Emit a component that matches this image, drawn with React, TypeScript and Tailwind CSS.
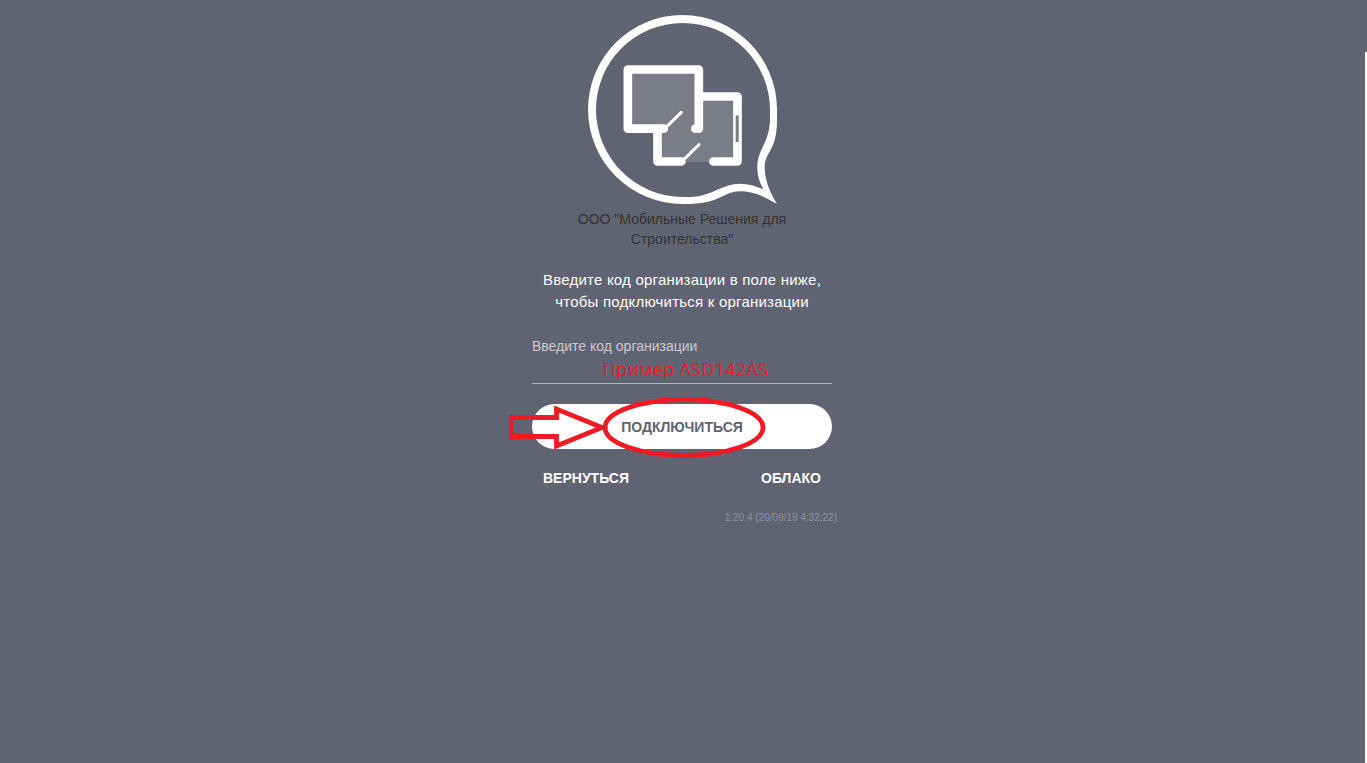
function Logo() {
  return (
    <svg className="block h-[210px] w-[210px] shrink-0" viewBox="0 0 630 630" aria-hidden="true">
      <path
        fill="#fff"
        fillRule="evenodd"
        d="M591 311V345C591 440 553 440 554 490C555 530 574 570 591 597C560 580 528 559 480 559C430 559 420 597 325 597H308A284 284 0 0 1 24 313A284 284 0 0 1 307 30A284 284 0 0 1 591 311Z
           M570 315A262 261 0 0 0 308 54A260 260 0 0 0 48 313A262 262 0 0 0 308 576H330C400 573 425 536 480 536C505 536 528 543 550 553C538 532 532 512 532 490C531 430 567 420 570 345Z"
      />
      <path fill="#7a7c88" d="M150 200H350V280H465V471H240V365H150Z" />
      <g fill="none" stroke="#fff" strokeWidth="26" strokeLinejoin="round" strokeLinecap="round">
        <path d="M251 371H143.500V193.500H356.500V371H346" />
        <path d="M370 274.500H472.500V469.500H400" />
        <path d="M232.500 384V469.500H304" />
      </g>
      <path d="M257 368L304 322M311 464L357 419" stroke="#fff" strokeWidth="9" strokeLinecap="round" />
      <rect x="467" y="331" width="9" height="80" fill="#7a7c88" />
    </svg>
  );
}

function Pointer() {
  return (
    <svg
      className="pointer-events-none absolute -left-[32px] -top-[14px] h-[75px] w-[340px]"
      viewBox="0 0 340 75"
      fill="none"
      stroke="#ed1c24"
      aria-hidden="true"
    >
      <path strokeWidth="4.800" d="M11.500 27.500H56.500V19L102 37.500L56.500 56V46.500H11.500Z" />
      <ellipse cx="184" cy="37.500" rx="79" ry="28" strokeWidth="4.800" />
    </svg>
  );
}

export default function App() {
  return (
    <div className="flex h-[763px] w-full overflow-hidden bg-[#606372] font-['Liberation_Sans',Arial,sans-serif]">
      <main className="flex min-w-0 flex-1 flex-col items-center pr-px">
        <div className="flex w-[300px] flex-col">
          <div className="flex h-[209px] justify-center pt-[5px]">
            <div className="ml-[6px]">
              <Logo />
            </div>
          </div>
          <p className="px-10 text-center text-sm leading-5 text-[#333]">
            ООО "Мобильные Решения для Строительства"
          </p>
          <p className="mt-5 text-center text-[15px] leading-[22px] tracking-[0.22px] text-white">
            Введите код организации в поле ниже, чтобы подключиться к организации
          </p>
          <label className="mt-[23px] flex h-[48px] flex-col border-b border-[#b2b4be] text-sm leading-5 text-[#c8c9cf]">
            <span>Введите код организации</span>
            <span className="pl-[7px] text-center font-['Open_Sans',sans-serif] text-lg leading-[26px] tracking-[0.3px] text-[#ed1c24]">
              Пример ASD142AS
            </span>
          </label>
          <div className="relative mt-5">
            <button className="h-[45px] w-full rounded-full bg-white text-sm font-bold text-[#606372]">
              ПОДКЛЮЧИТЬСЯ
            </button>
            <Pointer />
          </div>
          <div className="mt-[19px] flex justify-between px-[11px] text-sm leading-5 font-bold text-white">
            <button>ВЕРНУТЬСЯ</button>
            <button>ОБЛАКО</button>
          </div>
          <p className="-mr-[5px] mt-[23px] text-right text-[10px] leading-[14px] text-[#92949e]">
            1.20.4 (20/09/19 4:32:22)
          </p>
        </div>
      </main>
      <div className="mt-[52px] w-[2px] bg-white" />
    </div>
  );
}
